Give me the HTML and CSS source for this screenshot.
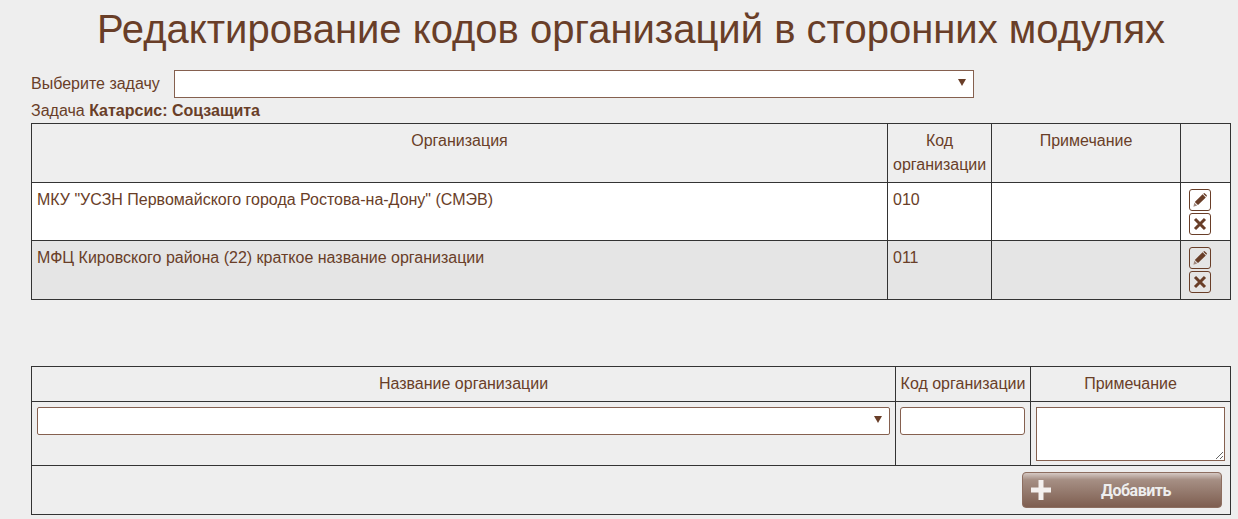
FILE: index.html
```html
<!DOCTYPE html>
<html>
<head>
    <meta charset="UTF-8">
    <title>Редактирование кодов организаций</title>
    <link rel="stylesheet" href="styles.css">
</head>
<body>
    <h1 class="page-title">Редактирование кодов организаций в сторонних модулях</h1>

    <div class="task-row">
        <label class="task-label">Выберите задачу</label>
        <div class="select-box task-select"><span class="select-arrow"></span></div>
    </div>
    <div class="task-name">Задача <b>Катарсис: Соцзащита</b></div>

    <table class="grid codes-table">
        <colgroup>
            <col class="col-org">
            <col class="col-code">
            <col class="col-note">
            <col class="col-actions">
        </colgroup>
        <thead>
            <tr>
                <th>Организация</th>
                <th>Код организации</th>
                <th>Примечание</th>
                <th></th>
            </tr>
        </thead>
        <tbody>
            <tr class="row-first">
                <td>МКУ "УСЗН Первомайского города Ростова-на-Дону" (СМЭВ)</td>
                <td>010</td>
                <td></td>
                <td class="actions">
                    <button class="icon-button">
                        <svg width="16" height="16" viewBox="0 0 16 16"><path d="M10.6 2.2 L13.8 5.4 L6 13 L2.8 9.9 Z M11.6 1.4 a1 1 0 0 1 1.3 0 L14.6 3.1 a1 1 0 0 1 0 1.3 L14.3 4.8 L11.2 1.8 Z" fill="#693e28"/><path d="M2.3 10.8 L5.2 13.6 L1.4 14.7 Z" fill="#a08a80"/></svg>
                    </button>
                    <button class="icon-button">
                        <svg width="16" height="16" viewBox="0 0 16 16"><path d="M3 3 L13 13 M13 3 L3 13" stroke="#693e28" stroke-width="3" fill="none"/></svg>
                    </button>
                </td>
            </tr>
            <tr class="row-alt">
                <td>МФЦ Кировского района (22) краткое название организации</td>
                <td>011</td>
                <td></td>
                <td class="actions">
                    <button class="icon-button">
                        <svg width="16" height="16" viewBox="0 0 16 16"><path d="M10.6 2.2 L13.8 5.4 L6 13 L2.8 9.9 Z M11.6 1.4 a1 1 0 0 1 1.3 0 L14.6 3.1 a1 1 0 0 1 0 1.3 L14.3 4.8 L11.2 1.8 Z" fill="#693e28"/><path d="M2.3 10.8 L5.2 13.6 L1.4 14.7 Z" fill="#a08a80"/></svg>
                    </button>
                    <button class="icon-button">
                        <svg width="16" height="16" viewBox="0 0 16 16"><path d="M3 3 L13 13 M13 3 L3 13" stroke="#693e28" stroke-width="3" fill="none"/></svg>
                    </button>
                </td>
            </tr>
        </tbody>
    </table>

    <table class="grid add-table">
        <colgroup>
            <col class="col-name">
            <col class="col-addcode">
            <col class="col-addnote">
        </colgroup>
        <thead>
            <tr>
                <th>Название организации</th>
                <th class="code-head">Код организации</th>
                <th>Примечание</th>
            </tr>
        </thead>
        <tbody>
            <tr class="input-row">
                <td><div class="select-box round"><span class="select-arrow"></span></div></td>
                <td class="code-cell"><input type="text" class="text-input"></td>
                <td class="note-cell"><textarea class="note-input"></textarea></td>
            </tr>
            <tr class="button-row">
                <td colspan="3">
                    <button class="add-button">
                        <svg class="plus" width="20" height="20" viewBox="0 0 20 20"><path d="M0 10 H20 M10 0 V20" stroke="#f4f0ee" stroke-width="5" fill="none"/></svg>
                        <span class="add-text">Добавить</span>
                    </button>
                </td>
            </tr>
        </tbody>
    </table>
</body>
</html>
```

FILE: styles.css
```css
/* Общие стили */
body {
    margin: 0;
    padding: 0 7px 0 31px;
    background-color: #eeeeee;
    font-family: "Liberation Sans", Arial, sans-serif;
    font-size: 16px;
    line-height: 24px;
    color: #693e28;
}

.page-title {
    margin: 0;
    padding-top: 6px;
    height: 70px;
    box-sizing: border-box;
    font-size: 40px;
    line-height: 46px;
    font-weight: normal;
    text-align: center;
}

/* Выбор задачи */
.task-row {
    display: flex;
    align-items: center;
    height: 28px;
}

.task-label {
    width: 143px;
}

.select-box {
    position: relative;
    height: 28px;
    box-sizing: border-box;
    border: 1px solid #85604f;
    background-color: #fff;
}

.select-box.round {
    border-radius: 2px;
}

.task-select {
    width: 800px;
}

.select-arrow {
    position: absolute;
    right: 7px;
    top: 8px;
    border-left: 4.5px solid transparent;
    border-right: 4.5px solid transparent;
    border-top: 7px solid #693e28;
}

.task-name {
    height: 25px;
    line-height: 26px;
}

/* Таблицы */
.grid {
    width: 1200px;
    table-layout: fixed;
    border-collapse: collapse;
}

.grid th,
.grid td {
    border: 1px solid #333;
    padding: 5px;
    vertical-align: top;
    font-weight: normal;
}

.grid th {
    text-align: center;
}

.col-code { width: 104px; }
.col-note { width: 189px; }
.col-actions { width: 50px; }

.codes-table thead tr { height: 59px; }
.codes-table .row-first { height: 58px; background-color: #fff; }
.codes-table .row-alt { height: 59px; background-color: #e5e5e5; }

.grid .actions {
    padding: 6px 8px 0;
    line-height: 0;
}

.icon-button {
    display: flex;
    align-items: center;
    justify-content: center;
    width: 22px;
    height: 22px;
    margin: 0 0 2px 0;
    padding: 0;
    box-sizing: border-box;
    border: 1px solid #693e28;
    border-radius: 3px;
    background: transparent;
}

/* Форма добавления */
.add-table {
    margin-top: 66px;
}

.col-addcode { width: 135px; }
.col-addnote { width: 200px; }

.add-table thead tr { height: 35px; }
.add-table .input-row { height: 64px; }
.add-table .button-row { height: 49px; }

.grid .code-head { padding: 5px 2px; white-space: nowrap; }
.grid .code-cell { padding: 5px 5px 5px 4px; }
.grid .note-cell { padding-bottom: 4px; }

.text-input {
    display: block;
    width: 100%;
    height: 28px;
    box-sizing: border-box;
    border: 1px solid #85604f;
    border-radius: 3px;
    background-color: #fff;
    padding: 0 4px;
}

.note-input {
    display: block;
    width: 100%;
    height: 54px;
    box-sizing: border-box;
    border: 1px solid #85604f;
    background-color: #fff;
    margin: 0;
}

.grid .button-row td {
    padding: 6px 8px 0 5px;
    text-align: right;
}

.add-button {
    display: inline-flex;
    align-items: center;
    width: 200px;
    height: 36px;
    box-sizing: border-box;
    padding: 0 8px;
    border: 1px solid #8d6e60;
    border-radius: 4px;
    background: linear-gradient(to bottom, #d5c9c3 0%, #a68f84 20%, #7e5e50 100%);
    color: #eee;
    font-family: "Roboto", "Liberation Sans", sans-serif;
    font-weight: bold;
    font-size: 16px;
    letter-spacing: -0.5px;
}

.add-text {
    margin-left: 50px;
}
```
